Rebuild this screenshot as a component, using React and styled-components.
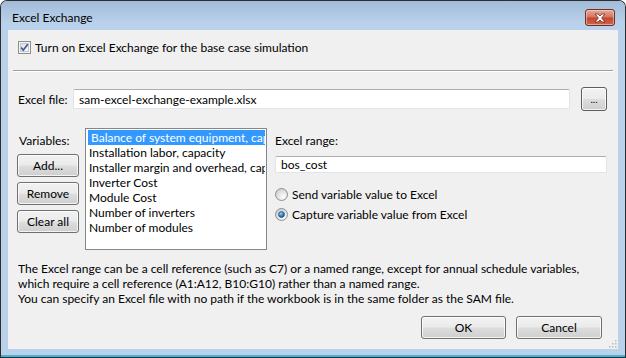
import React, { useState } from 'react';
import styled, { createGlobalStyle } from 'styled-components';

const GlobalStyle = createGlobalStyle`
  html, body { margin: 0; padding: 0; background: #ffffff; }
  body {
    font-family: Lato, "Noto Sans", sans-serif;
    font-size: 12px;
    color: #000;
  }
  * { box-sizing: border-box; }
`;

const Window = styled.div`
  width: 626px;
  height: 358px;
  border: 1px solid #2e2e2e;
  border-bottom-color: #14303d;
  border-radius: 7px 7px 0 0;
  background: #b9d1ea;
  box-shadow: inset 0 -2px 0 #3fb6d4;
  display: flex;
  flex-direction: column;
  overflow: hidden;
`;

const TitleBar = styled.div`
  height: 29px;
  flex: none;
  display: flex;
  align-items: center;
  justify-content: space-between;
  padding: 4px 10px 0 11px;
  background: linear-gradient(#a2bcd9, #b9d1ea 75%);
`;

const Title = styled.span`
  font-size: 12px;
  line-height: 15px;
`;

const CloseButton = styled.div`
  width: 30px;
  height: 17px;
  border: 1px solid #6b2f26;
  border-radius: 3px;
  background: linear-gradient(#e8a999, #d6735f 48%, #c2462f 52%, #cf6450);
  box-shadow: inset 0 0 0 1px rgba(255, 220, 210, 0.55);
  display: flex;
  align-items: center;
  justify-content: center;
`;

const Client = styled.div`
  position: relative;
  flex: 1;
  margin: 0 7px 8px;
  background: #f0f0f0;
  padding: 11px 11px 0 10px;
  display: flex;
  flex-direction: column;
`;

const CheckRow = styled.label`
  height: 13px;
  display: flex;
  align-items: center;
  gap: 4px;
  white-space: nowrap;
`;

const Separator = styled.div`
  margin: 16px -6px 0 -5px;
  height: 2px;
  border-top: 1px solid #a0a0a0;
  border-bottom: 1px solid #ffffff;
`;

const FileRow = styled.div`
  margin-top: 15px;
  height: 24px;
  display: flex;
  align-items: center;
`;

const Label = styled.span`
  width: ${(p) => p.$w || 'auto'};
  flex: none;
  line-height: 15px;
  white-space: nowrap;
`;

const TextBox = styled.div`
  flex: 1;
  height: ${(p) => p.$h}px;
  flex-shrink: 0;
  background: #fff;
  border: 1px solid #e2e3ea;
  border-top-color: #abadb3;
  border-radius: 2px;
  padding: 0 5px;
  display: flex;
  align-items: center;
  line-height: 15px;
  white-space: nowrap;
`;

const Button = styled.button`
  width: ${(p) => p.$w}px;
  height: ${(p) => p.$h || 23}px;
  flex: none;
  padding: 0;
  border: 1px solid ${(p) => (p.$dark ? '#5e5e5e' : '#707070')};
  border-radius: 3px;
  background: linear-gradient(#f2f2f2, #ebebeb 48%, #dddddd 52%, #cfcfcf);
  box-shadow: inset 0 0 0 1px rgba(255, 255, 255, 0.75);
  font: inherit;
  font-size: ${(p) => p.$fs || '12px'};
  color: #000;
  line-height: 15px;
  margin-left: ${(p) => p.$ml || 0}px;
`;

const Middle = styled.div`
  margin-top: 17px;
  display: flex;
  align-items: flex-start;
`;

const LeftCol = styled.div`
  width: 62px;
  margin-left: -1px;
  display: flex;
  flex-direction: column;
  gap: 5px;
`;

const ColLabel = styled.div`
  height: ${(p) => p.$h}px;
  padding: 5px 0 0 ${(p) => p.$pl || 0}px;
  line-height: 15px;
`;

const ListBox = styled.ul`
  width: 182px;
  height: 122px;
  margin: 0 0 0 6px;
  padding: 1px;
  list-style: none;
  background: #fff;
  border: 1px solid #828790;
  overflow: hidden;
`;

const ListItem = styled.li`
  height: 15px;
  line-height: 15px;
  padding-left: ${(p) => (p.$sel ? 3 : 2)}px;
  margin-left: ${(p) => (p.$sel ? 1 : 0)}px;
  background: ${(p) => (p.$sel ? '#3399ff' : 'transparent')};
  color: ${(p) => (p.$sel ? '#fff' : '#000')};
  white-space: nowrap;
  overflow: hidden;
`;

const RightCol = styled.div`
  flex: 1;
  margin-left: 8px;
  display: flex;
  flex-direction: column;
`;

const RadioRow = styled.label`
  height: 13px;
  display: flex;
  align-items: center;
  gap: 4px;
  margin-top: ${(p) => p.$mt}px;
  white-space: nowrap;
`;

const Note = styled.p`
  margin: 11px 0 0;
  line-height: 15px;
  white-space: nowrap;
`;

const Footer = styled.div`
  margin-top: 10px;
  padding-right: 5px;
  display: flex;
  justify-content: flex-end;
  gap: 10px;
`;

const Grip = styled.svg`
  position: absolute;
  right: 1px;
  bottom: 1px;
`;

function CheckBox() {
  return (
    <svg width="13" height="13" viewBox="0 0 13 13">
      <defs>
        <linearGradient id="cbg" x1="0" y1="0" x2="1" y2="1">
          <stop offset="0" stopColor="#dcdcdc" />
          <stop offset="1" stopColor="#ffffff" />
        </linearGradient>
      </defs>
      <rect x="0.5" y="0.5" width="12" height="12" fill="#f4f4f4" stroke="#8f8f8f" />
      <rect x="2.5" y="2.5" width="8" height="8" fill="url(#cbg)" stroke="#c8c8c8" />
      <path d="M3.2 6.4 L5.3 9.2 L9.8 3.2" fill="none" stroke="#3a57a0" strokeWidth="1.7" />
    </svg>
  );
}

function Radio({ on }) {
  return (
    <svg width="13" height="13" viewBox="0 0 13 13">
      <defs>
        <radialGradient id="rbg" cx="0.65" cy="0.7" r="0.7">
          <stop offset="0" stopColor="#ffffff" />
          <stop offset="1" stopColor="#d0d0d0" />
        </radialGradient>
        <radialGradient id="rdot" cx="0.4" cy="0.35" r="0.7">
          <stop offset="0" stopColor="#8fd0f6" />
          <stop offset="0.6" stopColor="#2a7bbf" />
          <stop offset="1" stopColor="#1b4f82" />
        </radialGradient>
      </defs>
      <circle cx="6.5" cy="6.5" r="6" fill="url(#rbg)" stroke="#8e8f8f" />
      {on && <circle cx="6.5" cy="6.5" r="3" fill="url(#rdot)" stroke="#21466e" strokeWidth="0.6" />}
    </svg>
  );
}

const variables = [
  'Balance of system equipment, capacity',
  'Installation labor, capacity',
  'Installer margin and overhead, capacity',
  'Inverter Cost',
  'Module Cost',
  'Number of inverters',
  'Number of modules',
];

export default function App() {
  const [selected, setSelected] = useState(0);
  const [capture, setCapture] = useState(true);

  return (
    <>
      <GlobalStyle />
      <Window>
        <TitleBar>
          <Title>Excel Exchange</Title>
          <CloseButton>
            <svg width="14" height="10" viewBox="0 0 14 10">
              <path
                d="M2 1 L5 1 L7 3 L9 1 L12 1 L8.6 5 L12 9 L9 9 L7 7 L5 9 L2 9 L5.4 5 Z"
                fill="#ffffff"
                stroke="#6a2b22"
                strokeWidth="0.8"
              />
            </svg>
          </CloseButton>
        </TitleBar>

        <Client>
          <CheckRow>
            <CheckBox />
            Turn on Excel Exchange for the base case simulation
          </CheckRow>

          <Separator />

          <FileRow>
            <Label $w="55px">Excel file:</Label>
            <TextBox $h={20}>sam-excel-exchange-example.xlsx</TextBox>
            <Button $w={26} $h={24} $dark $ml={11} $fs="10px">...</Button>
          </FileRow>

          <Middle>
            <LeftCol>
              <ColLabel $h={21} $pl={2}>Variables:</ColLabel>
              <Button $w={62}>Add...</Button>
              <Button $w={62}>Remove</Button>
              <Button $w={62}>Clear all</Button>
            </LeftCol>

            <ListBox>
              {variables.map((v, i) => (
                <ListItem key={v} $sel={i === selected} onClick={() => setSelected(i)}>
                  {v}
                </ListItem>
              ))}
            </ListBox>

            <RightCol>
              <ColLabel $h={28}>Excel range:</ColLabel>
              <TextBox $h={21}>bos_cost</TextBox>
              <RadioRow $mt={15} onClick={() => setCapture(false)}>
                <Radio on={!capture} />
                Send variable value to Excel
              </RadioRow>
              <RadioRow $mt={7} onClick={() => setCapture(true)}>
                <Radio on={capture} />
                Capture variable value from Excel
              </RadioRow>
            </RightCol>
          </Middle>

          <Note>
            The Excel range can be a cell reference (such as C7) or a named range, except for annual schedule variables,
            <br />
            which require a cell reference (A1:A12, B10:G10) rather than a named range.
            <br />
            You can specify an Excel file with no path if the workbook is in the same folder as the SAM file.
          </Note>

          <Footer>
            <Button $w={85}>OK</Button>
            <Button $w={86}>Cancel</Button>
          </Footer>

          <Grip width="9" height="9" viewBox="0 0 9 9">
            {[
              [7, 1],
              [7, 4],
              [4, 4],
              [7, 7],
              [4, 7],
              [1, 7],
            ].map(([x, y]) => (
              <rect key={`${x}-${y}`} x={x} y={y} width="1.5" height="1.5" fill="#b8b8b8" />
            ))}
          </Grip>
        </Client>
      </Window>
    </>
  );
}
